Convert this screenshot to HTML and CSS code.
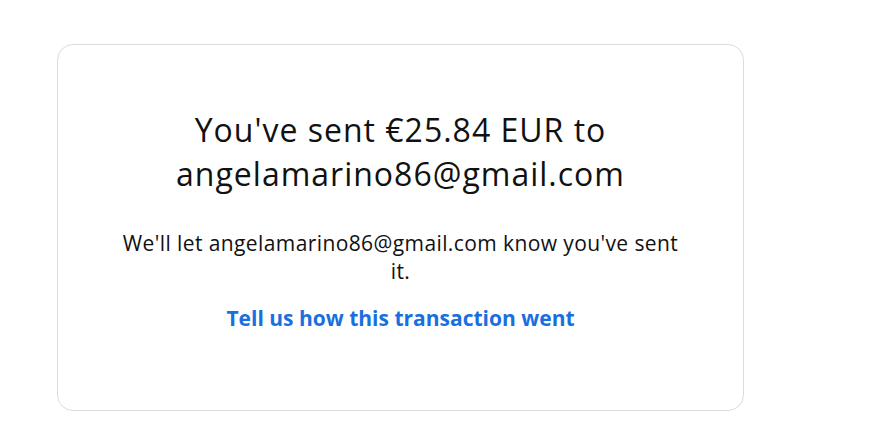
FILE: index.html
```html
<!DOCTYPE html>
<html lang="en">
<head>
<meta charset="utf-8">
<title>Sent</title>
<link rel="stylesheet" href="styles.css">
</head>
<body>
<main class="page">
  <section class="card">
    <h1 class="title">You've sent €25.84 EUR to angelamarino86@gmail.com</h1>
    <p class="note">We'll let angelamarino86@gmail.com know you've sent it.</p>
    <a class="link" href="#">Tell us how this transaction went</a>
  </section>
</main>
</body>
</html>
```

FILE: styles.css
```css
html, body {
  margin: 0;
  padding: 0;
  background: #ffffff;
}
body {
  font-family: "Open Sans", "Noto Sans", sans-serif;
  color: #111111;
}
.page {
  padding: 44px 0 0 57px;
}
.card {
  box-sizing: border-box;
  width: 687px;
  height: 367px;
  border: 1px solid #dcdcdc;
  border-radius: 16px;
  display: flex;
  flex-direction: column;
  align-items: center;
  padding: 63px 40px 0;
  text-align: center;
}
.title {
  margin: 0;
  font-weight: 400;
  font-size: 32px;
  line-height: 44px;
  letter-spacing: 1px;
  max-width: 470px;
}
.note {
  margin: 33px 0 0;
  font-size: 21px;
  line-height: 28px;
  letter-spacing: 0.4px;
  max-width: 562px;
}
.link {
  display: block;
  margin-top: 19px;
  font-size: 21px;
  line-height: 28px;
  font-weight: 700;
  color: #1a6fe0;
  text-decoration: none;
}
```
